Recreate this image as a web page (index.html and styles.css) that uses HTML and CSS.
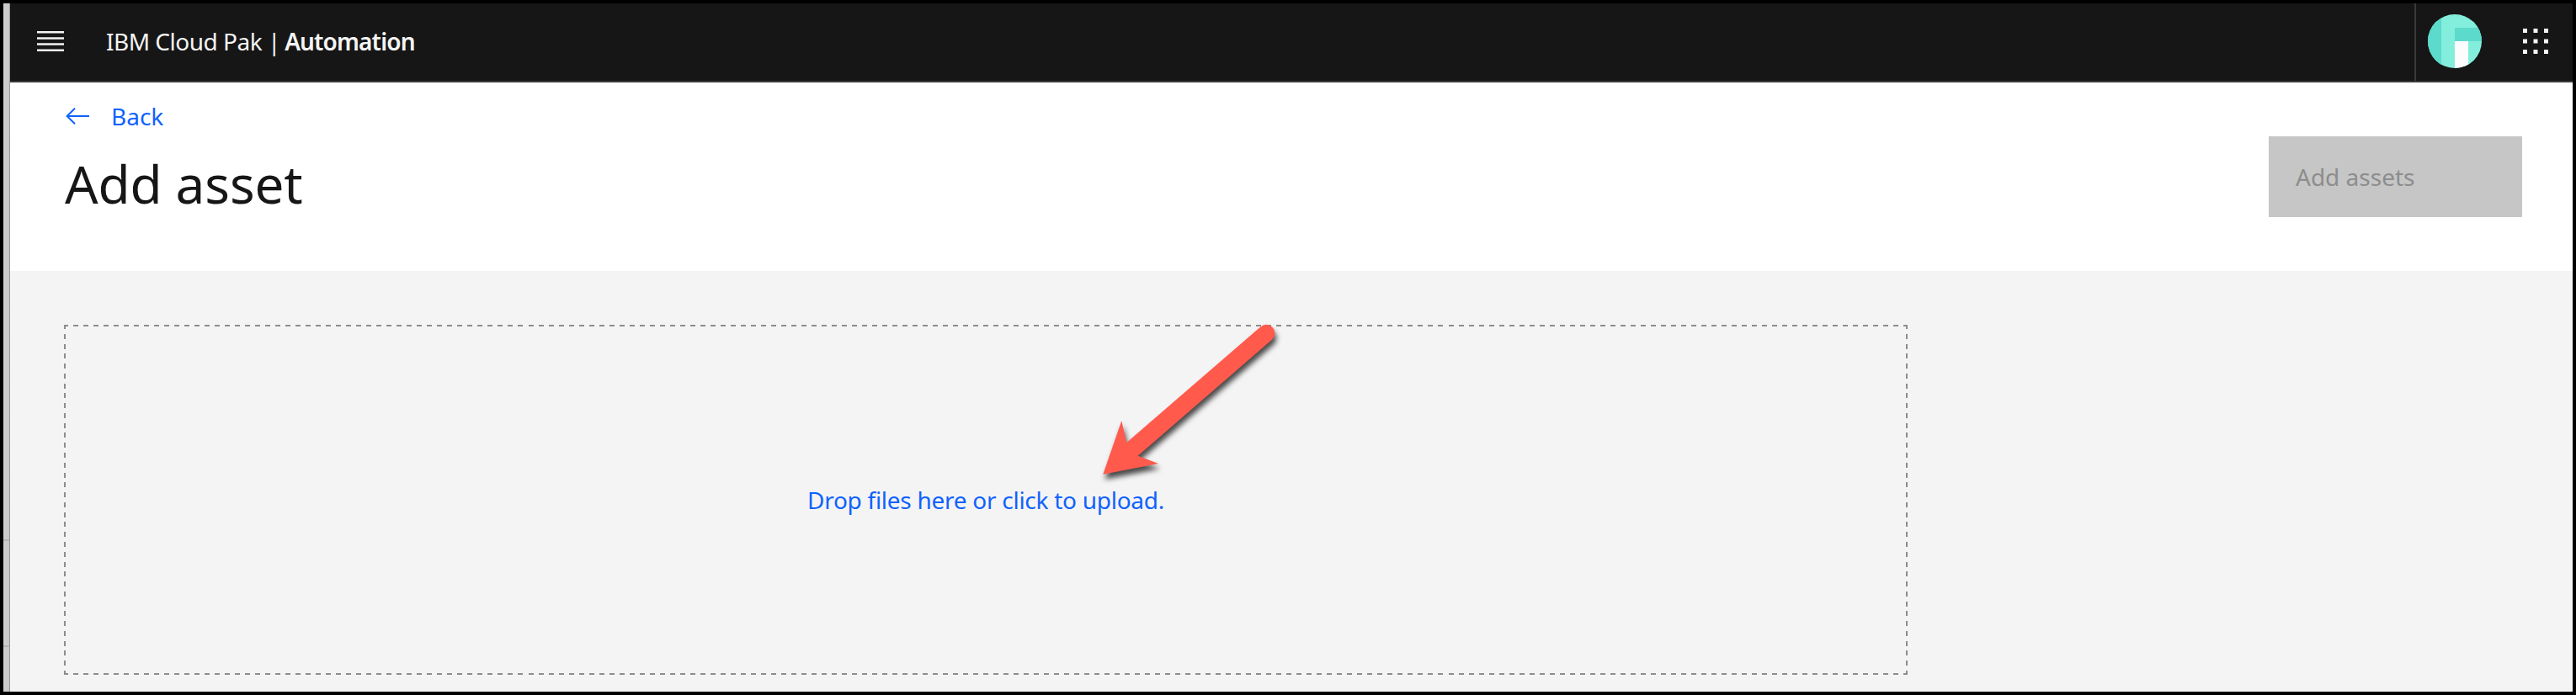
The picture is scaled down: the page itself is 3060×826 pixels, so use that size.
FILE: index.html
```
<!DOCTYPE html>
<html lang="en">
<head>
<meta charset="utf-8">
<title>Add asset</title>
<link rel="stylesheet" href="styles.css">
</head>
<body>
<div class="frame">
  <div class="gutter"></div>
  <div class="app">
    <header class="header">
      <svg class="menu" width="32" height="24" viewBox="0 0 32 24" fill="#f4f4f4"><path d="M0 0h32v2.6H0zM0 7.2h32v2.5H0zM0 14.2h32v2.5H0zM0 21.4h32V24H0z"/></svg>
      <div class="brand"><span class="product">IBM Cloud Pak |</span> <b class="suite">Automation</b></div>
      <div class="actions">
        <svg class="avatar" width="64" height="64" viewBox="0 0 64 64">
          <defs><clipPath id="disc"><circle cx="32" cy="32" r="32"/></clipPath></defs>
          <g clip-path="url(#disc)">
            <path fill="#84eedc" d="M0 0h64v64H0z"/>
            <path fill="#5cdacb" d="M0 0h16v64H0zM32 16h32v16H32z"/>
            <path fill="#fcfcfc" d="M32 32h16v32H32z"/>
          </g>
        </svg>
        <svg class="switcher" width="30" height="30" viewBox="0 0 30 30" fill="#f4f4f4"><path d="M0 0h5v5H0zM12.5 0h5v5h-5zM25 0h5v5h-5zM0 12.5h5v5H0zM12.5 12.5h5v5h-5zM25 12.5h5v5h-5zM0 25h5v5H0zM12.5 25h5v5h-5zM25 25h5v5h-5z"/></svg>
      </div>
    </header>
    <section class="title-bar">
      <div class="heading">
        <a class="back"><svg width="28" height="20" viewBox="0 0 28 20" fill="none" stroke="#0f62fe" stroke-width="2"><path d="M28 10H1.5M11 .8 1.6 10 11 19.2"/></svg><span class="back-label">Back</span></a>
        <h1 class="title">Add asset</h1>
      </div>
      <button class="add" disabled>Add assets</button>
    </section>
    <main class="content">
      <div class="dropzone"><span class="drop-label">Drop files here or click to upload.</span></div>
    </main>
  </div>
  <svg class="pointer" width="230" height="210" viewBox="0 0 230 210"><path fill="#ff5a4c" d="M10.3 183.7 32.3 120 38.3 146 197.3 8.4A10.3 10.3 0 0 1 211.2 23.6L51.7 161.7 76 171Z"/></svg>
</div>
</body>
</html>
```
FILE: styles.css
```
* { box-sizing: border-box; }
body { margin: 0; font-family: "Noto Sans", "Open Sans", sans-serif; font-size: 28px; color: #161616; }
.frame { position: relative; display: flex; width: 3060px; height: 826px; border: 4px solid #000; overflow: hidden; }
.gutter {
  width: 8px;
  border-right: 1px solid #999;
  background:
    linear-gradient(#b5b5b5, #b5b5b5) 0 637px / 100% 2px no-repeat,
    linear-gradient(#b5b5b5, #b5b5b5) 0 763px / 100% 2px no-repeat,
    linear-gradient(90deg, #cfcfcf, #c6c6c6);
}
.app { flex: 1; display: flex; flex-direction: column; background: #fff; }
.header { display: flex; align-items: center; height: 94px; padding-left: 32px; background: #161616; border-bottom: 2px solid #393939; color: #f4f4f4; }
.menu { margin-top: -2px; }
.brand { margin: 0 0 2px 50px; line-height: 38px; white-space: nowrap; }
.product { letter-spacing: -0.5px; }
.suite { margin-left: -2px; font-weight: 600; letter-spacing: -0.85px; }
.actions { display: flex; align-items: center; width: 188px; height: 92px; margin-left: auto; padding: 0 0 2px 14px; border-left: 2px solid #393939; }
.switcher { margin-left: 49px; }
.title-bar { display: flex; justify-content: space-between; height: 224px; padding: 22px 60px 0 64px; }
.back { display: flex; align-items: center; height: 36px; color: #0f62fe; }
.back svg { margin-left: 2px; }
.back-label { margin-left: 26px; }
.title { margin: 21px 0 0 1px; font-size: 62px; font-weight: 400; line-height: 82px; letter-spacing: -0.1px; }
.add { width: 301px; height: 96px; margin-top: 42px; padding: 0 32px; border: 0; background: #c6c6c6; color: #8d8d8d; font: inherit; text-align: left; }
.content { flex: 1; padding: 64px 0 20px 64px; background: #f4f4f4; }
.dropzone {
  --dash-x: repeating-linear-gradient(90deg, #8d8d8d 0 6px, transparent 6px 12.011px);
  --dash-y: repeating-linear-gradient(180deg, #8d8d8d 0 6px, transparent 6px 11.771px);
  display: flex; align-items: center; justify-content: center;
  width: 2190px; height: 416px;
  background:
    var(--dash-x) -1px 0 / 2192px 2px no-repeat,
    var(--dash-x) -1px 100% / 2192px 2px no-repeat,
    var(--dash-y) 0 -1px / 2px 418px no-repeat,
    var(--dash-y) 100% -1px / 2px 418px no-repeat;
  color: #0f62fe;
}
.drop-label { letter-spacing: -0.27px; }
.pointer { position: absolute; left: 1296px; top: 376px; filter: drop-shadow(2px 6px 3px rgba(0, 0, 0, .7)); }
```
